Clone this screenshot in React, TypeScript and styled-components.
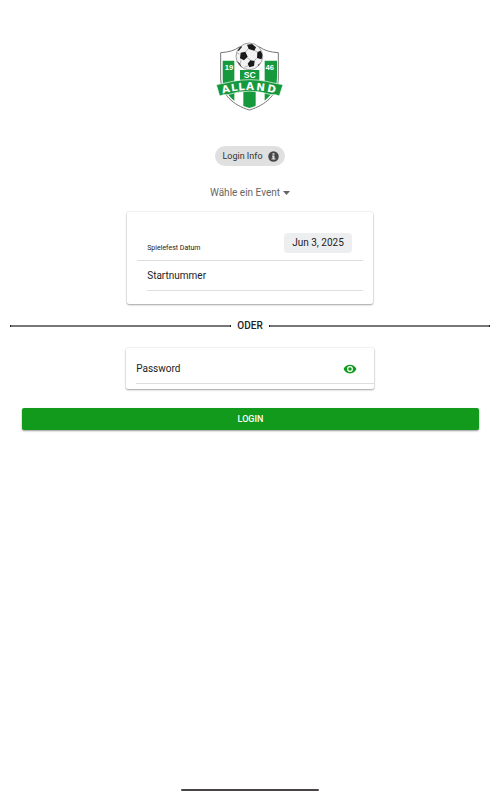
import React, { useState } from "react";
import styled, { createGlobalStyle } from "styled-components";

const GlobalStyle = createGlobalStyle`
  *, *::before, *::after { box-sizing: border-box; }
  body { margin: 0; background: #fff; }
  button, input, select { font: inherit; color: inherit; }
`;

const Page = styled.main`
  min-height: 100vh;
  display: flex;
  flex-direction: column;
  align-items: center;
  padding: 42px 10px 9px;
  font-family: Roboto, sans-serif;
  font-size: 10px;
  line-height: 12px;
  color: #222;
`;

const Logo = styled.svg`
  display: block;
  width: 68px;
  height: 69px;
  margin-bottom: 35px;
`;

const Chip = styled.button`
  display: flex;
  align-items: center;
  gap: 5px;
  height: 20px;
  padding: 0 6px 0 7px;
  border: 0;
  border-radius: 10px;
  background: #e0e0e0;
  color: #333;
  font-size: 9px;
  cursor: pointer;
`;

const EventPicker = styled.label`
  display: flex;
  align-items: center;
  gap: 3px;
  height: 14px;
  margin: 20px 0 12px;
  color: #666;
`;

const EventSelect = styled.select`
  appearance: none;
  padding: 0;
  border: 0;
  background: transparent;
  field-sizing: content;
`;

const Card = styled.section<{ $inset?: boolean }>`
  width: ${(p) => (p.$inset ? "calc(52% - 4px)" : "calc(52% - 2px)")};
  padding: ${(p) => (p.$inset ? "20px 10px 13px" : "0 0 5px 10px")};
  border-radius: 2px;
  background: #fff;
  box-shadow: 0 1px 2px rgba(0, 0, 0, 0.34), 0 0 2px rgba(0, 0, 0, 0.14);
`;

const DateRow = styled.div`
  display: flex;
  align-items: flex-end;
  justify-content: space-between;
  height: 29px;
  padding: 0 11px 7px 10px;
  border-bottom: 1px solid #dedede;
`;

const DateLabel = styled.label`
  font-size: 7px;
  line-height: 9px;
`;

const DateButton = styled.button`
  height: 20px;
  padding: 0 8px;
  border: 0;
  border-radius: 4px;
  background: #edeef0;
  cursor: pointer;
`;

const Field = styled.div<{ $indent?: boolean }>`
  display: flex;
  align-items: center;
  height: ${(p) => (p.$indent ? "30px" : "36px")};
  margin-left: ${(p) => (p.$indent ? "10px" : "0")};
  padding: ${(p) => (p.$indent ? "0" : "6px 17px 0 0")};
  border-bottom: 1px solid #dedede;
`;

const TextInput = styled.input`
  flex: 1;
  min-width: 0;
  height: 20px;
  padding: 0 8px;
  border: 0;
  outline: 0;
  background: transparent;
`;

const EyeButton = styled.button`
  display: flex;
  padding: 0;
  border: 0;
  background: transparent;
  color: #119a1b;
  cursor: pointer;
`;

const Separator = styled.div`
  align-self: stretch;
  display: flex;
  align-items: center;
  gap: 6px;
  margin: 16px 0;
  font-weight: 500;
`;

const Rule = styled.hr`
  flex: 1;
  height: 2px;
  margin: 0;
  border: solid #222;
  border-width: 0 1px;
  background: #777;
`;

const LoginButton = styled.button`
  align-self: stretch;
  height: 22px;
  margin: 19px 11px 0 12px;
  border: 0;
  border-radius: 2px;
  background: #119a1b;
  color: #fff;
  font-size: 9px;
  font-weight: 500;
  text-transform: uppercase;
  box-shadow: 0 1px 2px rgba(0, 0, 0, 0.4);
  cursor: pointer;
`;

const HomeBar = styled.div`
  width: 138px;
  height: 2px;
  margin-top: auto;
  border-radius: 1px;
  background: #484446;
`;

function ClubLogo() {
  return (
    <Logo viewBox="35 22 204 207" role="img" aria-label="SC Alland 1946">
      <defs>
        <clipPath id="shield">
          <path d="M54 59Q88 56 105 43H166Q184 56 218 59V130C218 173 182 207 135 220C89 207 54 173 54 130Z" />
        </clipPath>
        <clipPath id="ball"><circle cx="135" cy="65" r="39" /></clipPath>
      </defs>
      <path d="M49 54Q85 52 105 37H166Q185 52 222 54V130C222 178 184 212 135 226C87 212 49 178 49 130Z" fill="#fff" stroke="#777" strokeWidth="3" />
      <g clipPath="url(#shield)" fill="#16983c">
        <path d="M54 78H90V200H54ZM181 78H218V200H181ZM117 165H154V228H117Z" />
      </g>
      <path d="M107 106H165V148H107Z" fill="#16983c" />
      <circle cx="135" cy="65" r="40" fill="#f2f2f2" stroke="#777" strokeWidth="2" />
      <g clipPath="url(#ball)">
        <path d="M123 52L132 42M128 69L139 77M110 75L108 87M105 58L98 55M150 47L160 52M157 70L149 80M132 93L120 98" fill="none" stroke="#999" strokeWidth="2" />
        <g fill="#191919">
          <path d="M109 54L123 51L130 66L119 77L107 71Z" />
          <path d="M128 30L143 28L155 38L150 48L133 43Z" />
          <path d="M159 53L168 48L177 60L171 74L158 70Z" />
          <path d="M138 77L151 79L149 94L135 98L130 87Z" />
          <path d="M94 45L109 32L113 37L103 49Z" />
          <path d="M95 76L107 87L114 101L99 94Z" />
          <path d="M160 91L170 84L164 97Z" />
        </g>
      </g>
      <path d="M36 150Q70 144 85 140Q135 130 186 140Q201 144 236 150L225 184Q214 179 200 180Q135 159 71 180Q57 179 46 184Z" fill="#16983c" stroke="#fff" strokeWidth="2" />
      <g fill="#fff" fontFamily="Liberation Sans, sans-serif" fontWeight="700" textAnchor="middle">
        <text x="74" y="107" fontSize="23">19</text>
        <text x="196" y="107" fontSize="23">46</text>
        <text x="136" y="131" fontSize="26">SC</text>
        <g fontFamily="DejaVu Sans, sans-serif" fontSize="31">
          <text transform="translate(66 174) rotate(-12)">A</text>
          <text transform="translate(91 169) rotate(-8)">L</text>
          <text transform="translate(112 167) rotate(-4)">L</text>
          <text transform="translate(137 166)">A</text>
          <text transform="translate(168 168) rotate(6)">N</text>
          <text transform="translate(200 173) rotate(12)">D</text>
        </g>
      </g>
    </Logo>
  );
}

export default function App() {
  const [visible, setVisible] = useState(false);
  return (
    <>
      <GlobalStyle />
      <Page>
        <ClubLogo />
        <Chip type="button">
          Login Info
          <svg width="11" height="11" viewBox="0 0 22 22" aria-hidden="true">
            <circle cx="11" cy="11" r="10.5" fill="#484848" />
            <path d="M9 4.5h4v3H9zM8 9h5v6h2v2H7v-2h2v-4H8z" fill="#e0e0e0" />
          </svg>
        </Chip>
        <EventPicker>
          <EventSelect aria-label="Event">
            <option>Wähle ein Event</option>
          </EventSelect>
          <svg width="7" height="4" viewBox="0 0 7 4" aria-hidden="true">
            <path d="M0 0h7L3.5 4z" fill="#666" />
          </svg>
        </EventPicker>
        <Card $inset>
          <DateRow>
            <DateLabel htmlFor="date">Spielefest Datum</DateLabel>
            <DateButton id="date" type="button">Jun 3, 2025</DateButton>
          </DateRow>
          <Field $indent>
            <label htmlFor="number">Startnummer</label>
            <TextInput id="number" />
          </Field>
        </Card>
        <Separator><Rule />ODER<Rule /></Separator>
        <Card>
          <Field>
            <label htmlFor="password">Password</label>
            <TextInput id="password" type={visible ? "text" : "password"} />
            <EyeButton type="button" aria-label="Show password" onClick={() => setVisible(!visible)}>
              <svg width="14" height="14" viewBox="0 0 24 24" fill="currentColor" aria-hidden="true">
                <path d="M12 4.5C7 4.5 2.7 7.6 1 12c1.7 4.4 6 7.5 11 7.5s9.3-3.1 11-7.5c-1.7-4.4-6-7.5-11-7.5zM12 17a5 5 0 1 1 0-10 5 5 0 0 1 0 10zm0-8a3 3 0 1 0 0 6 3 3 0 0 0 0-6z" />
              </svg>
            </EyeButton>
          </Field>
        </Card>
        <LoginButton type="submit">Login</LoginButton>
        <HomeBar />
      </Page>
    </>
  );
}
